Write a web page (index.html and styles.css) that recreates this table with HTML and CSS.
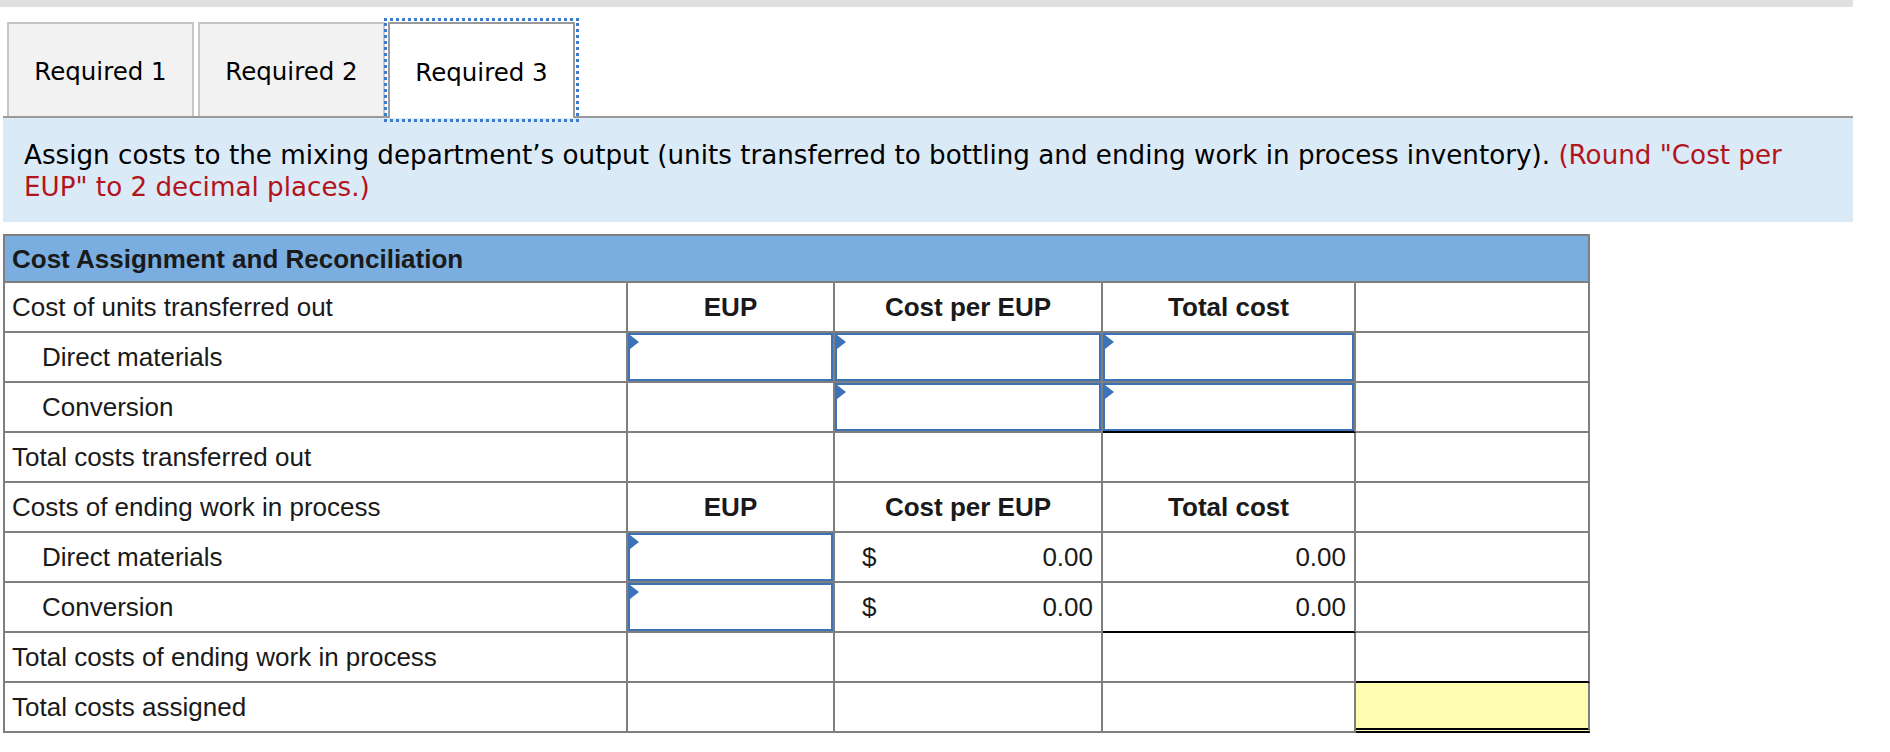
FILE: index.html
```html
<!DOCTYPE html>
<html lang="en">
<head>
<meta charset="utf-8">
<title>Cost Assignment and Reconciliation</title>
<link rel="stylesheet" href="styles.css">
</head>
<body>
<div class="topbar"></div>
<div class="tabs">
  <div class="tab">Required 1</div>
  <div class="tab">Required 2</div>
  <div class="tab tab-active">Required 3</div>
</div>
<div class="panel">
  <p class="instr">Assign costs to the mixing department’s output (units transferred to bottling and ending work in process inventory). <span class="note">(Round "Cost per EUP" to 2 decimal places.)</span></p>
</div>
<div class="sheet">
  <table class="grid">
    <colgroup>
      <col class="c1"><col class="c2"><col class="c3"><col class="c4"><col class="c5">
    </colgroup>
    <tr class="head-row">
      <td colspan="5" class="head">Cost Assignment and Reconciliation</td>
    </tr>
    <tr>
      <td class="lbl">Cost of units transferred out</td>
      <td class="ch">EUP</td>
      <td class="ch">Cost per EUP</td>
      <td class="ch">Total cost</td>
      <td></td>
    </tr>
    <tr>
      <td class="lbl ind">Direct materials</td>
      <td class="inp"><div class="box"><span class="flag"></span></div></td>
      <td class="inp"><div class="box"><span class="flag"></span></div></td>
      <td class="inp"><div class="box"><span class="flag"></span></div></td>
      <td></td>
    </tr>
    <tr>
      <td class="lbl ind">Conversion</td>
      <td></td>
      <td class="inp"><div class="box"><span class="flag"></span></div></td>
      <td class="inp sum-above"><div class="box"><span class="flag"></span></div></td>
      <td></td>
    </tr>
    <tr>
      <td class="lbl">Total costs transferred out</td>
      <td></td>
      <td></td>
      <td></td>
      <td></td>
    </tr>
    <tr>
      <td class="lbl">Costs of ending work in process</td>
      <td class="ch">EUP</td>
      <td class="ch">Cost per EUP</td>
      <td class="ch">Total cost</td>
      <td></td>
    </tr>
    <tr>
      <td class="lbl ind">Direct materials</td>
      <td class="inp"><div class="box"><span class="flag"></span></div></td>
      <td class="num"><div class="money"><span>$</span><span>0.00</span></div></td>
      <td class="num">0.00</td>
      <td></td>
    </tr>
    <tr>
      <td class="lbl ind">Conversion</td>
      <td class="inp"><div class="box"><span class="flag"></span></div></td>
      <td class="num"><div class="money"><span>$</span><span>0.00</span></div></td>
      <td class="num sum-above">0.00</td>
      <td></td>
    </tr>
    <tr>
      <td class="lbl">Total costs of ending work in process</td>
      <td></td>
      <td></td>
      <td></td>
      <td class="sum-above"></td>
    </tr>
    <tr>
      <td class="lbl">Total costs assigned</td>
      <td></td>
      <td></td>
      <td></td>
      <td class="total"></td>
    </tr>
  </table>
</div>
</body>
</html>
```

FILE: styles.css
```css
html, body {
  margin: 0;
  padding: 0;
  background: #ffffff;
}

body {
  width: 1890px;
  font-family: "Liberation Sans", Arial, sans-serif;
  color: #1a1a1a;
}

.topbar {
  width: 1853px;
  height: 7px;
  background: #e0e0e0;
}

.tabs {
  display: flex;
  align-items: flex-start;
  gap: 4px;
  margin-top: 15px;
  padding-left: 7px;
  height: 94px;
}

.tab {
  box-sizing: border-box;
  width: 187px;
  height: 94px;
  display: flex;
  align-items: center;
  justify-content: center;
  padding-top: 3px;
  background: #f2f2f2;
  border: 2px solid #c6c6c6;
  border-bottom: none;
  font-family: "DejaVu Sans", Verdana, sans-serif;
  font-size: 24.5px;
  color: #000;
}

.tab-active {
  position: relative;
  z-index: 1;
  height: 96px;
  margin-left: -1px;
  background: #ffffff;
  border-color: #9a9a9a;
  outline: 3px dotted #3d7ccc;
  outline-offset: 1px;
}

.panel {
  margin-left: 3px;
  width: 1850px;
  box-sizing: border-box;
  background: #dbeaf7;
  border-top: 2px solid #9a9a9a;
  padding: 21px 40px 19px 21px;
}

.instr {
  margin: 0;
  font-family: "DejaVu Sans", Verdana, sans-serif;
  font-size: 26.2px;
  line-height: 32px;
  color: #000;
}

.note {
  color: #b3141c;
}

.sheet {
  padding: 12px 0 0 3px;
}

.grid {
  table-layout: fixed;
  width: 1587px;
  border-collapse: separate;
  border-spacing: 0;
  border-top: 2px solid #7f7f7f;
  border-left: 2px solid #7f7f7f;
  font-size: 26px;
}

.c1 { width: 623px; }
.c2 { width: 207px; }
.c3 { width: 268px; }
.c4 { width: 253px; }
.c5 { width: 234px; }

.grid td {
  box-sizing: border-box;
  height: 50px;
  padding: 0 8px;
  border-right: 2px solid #7f7f7f;
  border-bottom: 2px solid #7f7f7f;
  vertical-align: middle;
  white-space: nowrap;
}

.grid .head-row td {
  height: 47px;
}

.grid td.head {
  background: #7aaee1;
  font-weight: bold;
  padding-left: 7px;
  padding-top: 2px;
}

.grid td.lbl {
  padding-left: 7px;
}

.grid td.ind {
  padding-left: 37px;
}

.grid td.ch {
  text-align: center;
  font-weight: bold;
}

.grid td.inp {
  padding: 0;
}

.box {
  position: relative;
  box-sizing: border-box;
  height: 48px;
  border: 2px solid #3b72b8;
  background: #ffffff;
}

.flag {
  position: absolute;
  left: 0;
  top: 0;
  width: 0;
  height: 0;
  border-top: 7px solid transparent;
  border-bottom: 7px solid transparent;
  border-left: 9px solid #3b72b8;
}

.grid td.num {
  text-align: right;
  padding-right: 8px;
}

.money {
  display: flex;
  justify-content: space-between;
  padding-left: 19px;
}

.grid td.sum-above {
  border-bottom-color: #000;
}

.grid td.total {
  background: #fffdb0;
  border-bottom: 5px double #000;
}
```
